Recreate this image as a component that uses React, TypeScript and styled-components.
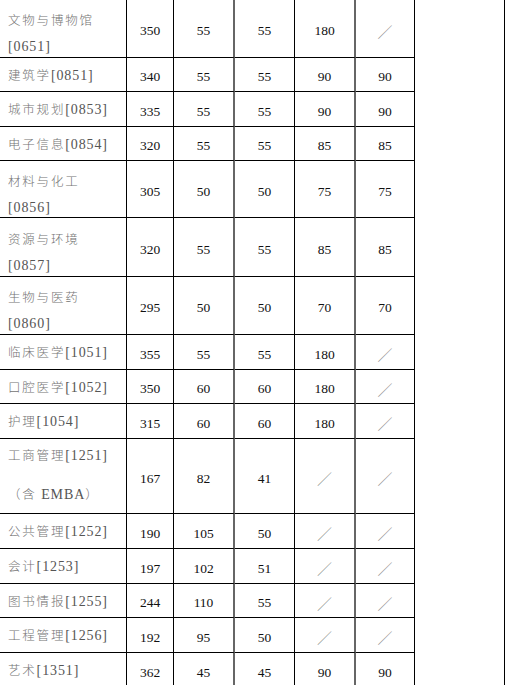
import React, { FC } from 'react';
import styled, { createGlobalStyle } from 'styled-components';

interface Row {
    name: string[];
    h: number;
    v: string[];
}

const rows: Row[] = [
    { name: ['文物与博物馆', '[0651]'], h: 58, v: ['350', '55', '55', '180', '/'] },
    { name: ['建筑学[0851]'], h: 34, v: ['340', '55', '55', '90', '90'] },
    { name: ['城市规划[0853]'], h: 35, v: ['335', '55', '55', '90', '90'] },
    { name: ['电子信息[0854]'], h: 34, v: ['320', '55', '55', '85', '85'] },
    { name: ['材料与化工', '[0856]'], h: 57, v: ['305', '50', '50', '75', '75'] },
    { name: ['资源与环境', '[0857]'], h: 59, v: ['320', '55', '55', '85', '85'] },
    { name: ['生物与医药', '[0860]'], h: 58, v: ['295', '50', '50', '70', '70'] },
    { name: ['临床医学[1051]'], h: 35, v: ['355', '55', '55', '180', '/'] },
    { name: ['口腔医学[1052]'], h: 34, v: ['350', '60', '60', '180', '/'] },
    { name: ['护理[1054]'], h: 35, v: ['315', '60', '60', '180', '/'] },
    { name: ['工商管理[1251]', '（含 EMBA）'], h: 75, v: ['167', '82', '41', '/', '/'] },
    { name: ['公共管理[1252]'], h: 35, v: ['190', '105', '50', '/', '/'] },
    { name: ['会计[1253]'], h: 35, v: ['197', '102', '51', '/', '/'] },
    { name: ['图书情报[1255]'], h: 34, v: ['244', '110', '55', '/', '/'] },
    { name: ['工程管理[1256]'], h: 35, v: ['192', '95', '50', '/', '/'] },
    { name: ['艺术[1351]'], h: 35, v: ['362', '45', '45', '90', '90'] },
];

// right border of each value column: thin black or thicker grey
const colEdges = ['thin', 'grey', 'thin', 'grey', 'thin'];

// latin bits (codes, EMBA) are set in the serif face, the rest in CJK
const renderLine = (line: string) =>
    line.split(/(\[\d+\]|EMBA)/).filter(Boolean).map((part, k) =>
        /^(\[\d+\]|EMBA)$/.test(part) ? <Code key={k}>{part}</Code> : <Han key={k}>{part}</Han>
    );

const App: FC = () => {
    return (
        <>
            <GlobalStyle />
            <Page>
                <Grid $rows={rows.map((r) => `${r.h}px`).join(' ')}>
                    {rows.map((row, i) => (
                        <React.Fragment key={i}>
                            <NameCell $tall={row.h > 60} $multi={row.name.length > 1}>
                                {row.name.map((line) => (
                                    <NameLine key={line}>{renderLine(line)}</NameLine>
                                ))}
                            </NameCell>
                            {row.v.map((val, j) => (
                                <ValueCell key={j} $edge={colEdges[j]}>
                                    {val === '/' ? <Slash>／</Slash> : val}
                                </ValueCell>
                            ))}
                        </React.Fragment>
                    ))}
                </Grid>
                <Side />
            </Page>
        </>
    );
};

export default App;

const GlobalStyle = createGlobalStyle`
  html, body {
    margin: 0;
    padding: 0;
    background: #ffffff;
    overflow: hidden;
  }
  #root {
    height: 685px;
    overflow: hidden;
  }
`
const Page = styled.div`
  display: flex;
  align-items: stretch;
  width: 507px;
  height: 685px;
  overflow: hidden;
`
const Grid = styled.div<{ $rows: string }>`
  display: grid;
  grid-template-columns: 127px 47px 61px 60px 61px 59px;
  grid-template-rows: ${({ $rows }) => $rows};
  align-self: flex-start;
  width: 415px;
`
const NameCell = styled.div<{ $tall: boolean; $multi: boolean }>`
  box-sizing: border-box;
  display: flex;
  flex-direction: column;
  justify-content: center;
  padding: ${({ $multi, $tall }) => ($tall ? '0 0 2px 8px' : $multi ? '10px 0 0 8px' : '1px 0 0 8px')};
  border-right: 1px solid #000;
  border-bottom: 1px solid #000;
  line-height: ${({ $tall }) => ($tall ? '38px' : '26px')};
  white-space: nowrap;
  overflow: hidden;
`
const NameLine = styled.div`
  display: block;
`
const Han = styled.span`
  font-family: "Noto Sans CJK SC", sans-serif;
  font-size: 12.5px;
  font-weight: 300;
  letter-spacing: 1.8px;
  color: #737373;
`
const Code = styled.span`
  font-family: "Liberation Serif", serif;
  font-size: 14px;
  letter-spacing: 0.9px;
  color: #555;
`
const ValueCell = styled.div<{ $edge: string }>`
  box-sizing: border-box;
  display: flex;
  align-items: center;
  justify-content: center;
  padding-top: 5px;
  border-bottom: 1px solid #000;
  border-right: ${({ $edge }) => ($edge === 'grey' ? '2px solid #666' : '1px solid #000')};
  font-family: "Liberation Serif", serif;
  font-size: 13.5px;
  color: #111;
`
const Slash = styled.span`
  font-family: "Noto Sans CJK SC", sans-serif;
  font-size: 15px;
  font-weight: 300;
  color: #8a8a8a;
`
const Side = styled.div`
  box-sizing: border-box;
  width: 90px;
  border-right: 1px solid #000;
`
